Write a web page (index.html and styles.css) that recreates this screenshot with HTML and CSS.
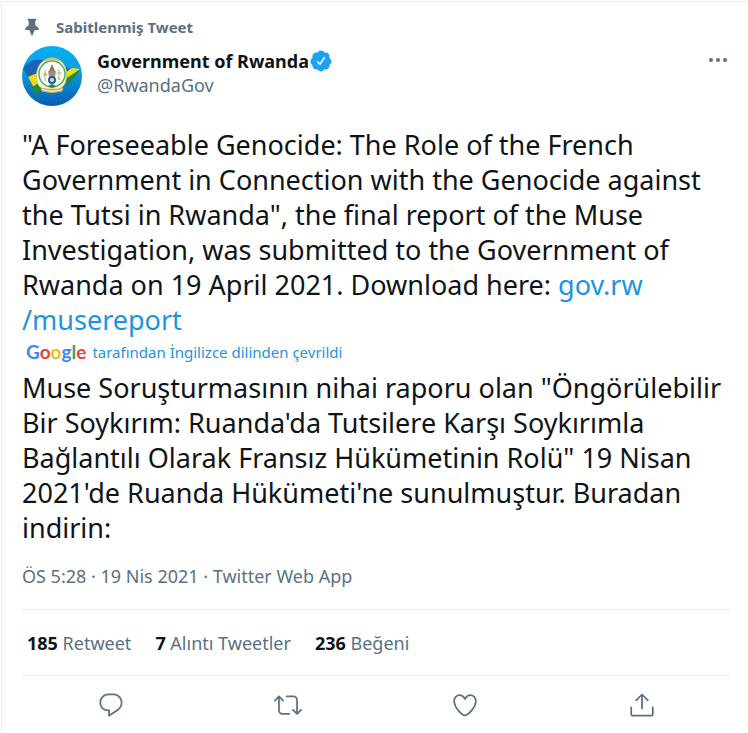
FILE: index.html
```html
<!DOCTYPE html>
<html lang="tr">
<head>
<meta charset="utf-8">
<meta name="viewport" content="width=device-width, initial-scale=1">
<title>Government of Rwanda</title>
<link rel="stylesheet" href="styles.css">
</head>
<body>
<article class="tweet">
  <div class="pinned">
    <svg class="pin" viewBox="0 0 24 24" aria-hidden="true"><path d="M20.235 14.61c-.375-1.745-2.342-3.506-4.01-4.125l-.544-4.948 1.495-2.242c.157-.236.172-.538.037-.787-.134-.25-.392-.403-.675-.403h-9.14c-.284 0-.542.154-.676.403-.134.25-.12.553.038.788l1.498 2.247-.484 4.943c-1.668.62-3.633 2.38-4.004 4.116-.04.16-.016.404.132.594.103.132.304.29.68.29H8.64l2.904 6.712c.078.184.26.302.458.302s.38-.118.46-.302l2.903-6.713h4.057c.376 0 .576-.156.68-.286.146-.188.172-.434.135-.59z"/></svg>
    <span>Sabitlenmiş Tweet</span>
  </div>
  <header class="author">
    <svg class="avatar" viewBox="0 0 60 60" aria-hidden="true">
      <defs>
        <linearGradient id="sky" x1="0" y1="0" x2="0" y2="1"><stop offset="0" stop-color="#04b0f2"/><stop offset=".4" stop-color="#0a9fe4"/><stop offset="1" stop-color="#075fae"/></linearGradient>
        <clipPath id="round"><circle cx="30" cy="30" r="30"/></clipPath>
      </defs>
      <g clip-path="url(#round)">
        <rect width="60" height="60" fill="url(#sky)"/>
        <path d="M1 23C6 15 12 13 20 14c9 2 17 6 24 7l10 4-9 4-30 8-9-6z" fill="#1c63b5"/>
        <path d="M6 31c4-1 6-4 10-3l26-1c4-1 6-5 9-5l7 1c-6 4-9 10-15 14l-28 4-4-1z" fill="#f4d90d"/>
        <path d="M10 42c3-2 4-5 8-6l24-3c6-2 10-7 16-9-4 6-8 12-15 15-9 4-19 3-26 7l-3 3z" fill="#23893b"/>
        <path d="M15 36c-2-11 2-23 15-24 13 1 16 13 14 22-1 5-4 8-7 9H22c-4-1-6-4-7-7z" fill="#f6f7e8" stroke="#cfc66c"/>
        <circle cx="30" cy="28" r="13" fill="#fffef7" stroke="#5aab62" stroke-width="1.5"/>
        <path d="M22 15q8-4 16 0" fill="none" stroke="#d1bc53" stroke-width="1.5"/>
        <path d="M30 18l3 7h-6z" fill="#8d7560"/><path d="M26 25h8l-1 6h-6z" fill="#b08878"/>
        <circle cx="30" cy="34" r="3" fill="#d5e9ed" stroke="#165f9b" stroke-width="2"/>
        <path d="M23 24v11M37 23v10M21 29h4M35 27h5" stroke="#9dbd91"/>
        <path d="M22 27l3 2M36 32l2 2" stroke="#dc7770"/>
        <path d="M26 40l4-2 4 2-4 2z" fill="#218440"/>
        <path d="M19 42q11 4 22 0l-1 3q-10 3-20 0z" fill="#f4ead0" stroke="#c8a949"/>
      </g>
    </svg>
    <div class="names">
      <div class="name"><a href="#">Government of Rwanda</a>
        <svg class="verified" viewBox="0 0 24 24" role="img" aria-label="Onaylanmış hesap"><path d="M22.5 12.5c0-1.58-.875-2.95-2.148-3.6.154-.435.238-.905.238-1.4 0-2.21-1.71-3.998-3.818-3.998-.47 0-.92.084-1.336.25C14.818 2.415 13.51 1.5 12 1.5s-2.816.917-3.437 2.25c-.415-.165-.866-.25-1.336-.25-2.11 0-3.818 1.79-3.818 4 0 .494.083.964.237 1.4-1.272.65-2.147 2.018-2.147 3.6 0 1.495.782 2.798 1.942 3.486-.02.17-.032.34-.032.514 0 2.21 1.708 4 3.818 4 .47 0 .92-.086 1.335-.25.62 1.334 1.926 2.25 3.437 2.25 1.512 0 2.818-.916 3.437-2.25.415.163.865.248 1.336.248 2.11 0 3.818-1.79 3.818-4 0-.174-.012-.344-.033-.513 1.158-.687 1.943-1.99 1.943-3.484zm-6.616-3.334l-4.334 6.5c-.145.217-.382.334-.625.334-.143 0-.288-.04-.416-.126l-.115-.094-2.415-2.415c-.293-.293-.293-.768 0-1.06s.768-.294 1.06 0l1.77 1.767 3.825-5.74c.23-.345.696-.436 1.04-.207.346.23.44.696.21 1.04z"/></svg>
      </div>
      <a class="handle" href="#">@RwandaGov</a>
    </div>
    <button class="more" type="button" aria-label="Daha fazla"><svg viewBox="0 0 24 24"><circle cx="5" cy="12" r="2"/><circle cx="12" cy="12" r="2"/><circle cx="19" cy="12" r="2"/></svg></button>
  </header>
  <p class="text" lang="en">"A Foreseeable Genocide: The Role of the French Government in Connection with the Genocide against the Tutsi in Rwanda", the final report of the Muse Investigation, was submitted to the Government of Rwanda on 19 April 2021. Download here: <a href="#">gov.rw<wbr>/musereport</a></p>
  <a class="translated" href="#"><span class="google"><span class="blue">G</span><span class="red">o</span><span class="yellow">o</span><span class="blue">g</span><span class="green">l</span><span class="red">e</span></span><span>tarafından İngilizce dilinden çevrildi</span></a>
  <p class="text">Muse Soruşturmasının nihai raporu olan "Öngörülebilir Bir Soykırım: Ruanda'da Tutsilere Karşı Soykırımla Bağlantılı Olarak Fransız Hükümetinin Rolü" 19 Nisan 2021'de Ruanda Hükümeti'ne sunulmuştur. Buradan indirin:</p>
  <div class="meta">ÖS 5:28 · 19 Nis 2021 · Twitter Web App</div>
  <div class="stats">
    <a href="#"><strong>185</strong> Retweet</a>
    <a href="#"><strong>7</strong> Alıntı Tweetler</a>
    <a href="#"><strong>236</strong> Beğeni</a>
  </div>
  <div class="actions">
    <button type="button" aria-label="Yanıtla"><svg viewBox="0 0 24 24"><path d="M14.046 2.242l-4.148-.01h-.002c-4.374 0-7.8 3.427-7.8 7.802 0 4.098 3.186 7.206 7.465 7.37v3.828c0 .108.044.286.12.403.142.225.384.347.632.347.138 0 .277-.038.402-.118.264-.168 6.473-4.14 8.088-5.506 1.902-1.61 3.04-3.97 3.043-6.312v-.017c-.006-4.367-3.43-7.787-7.8-7.788zm3.787 12.972c-1.134.96-4.862 3.405-6.772 4.643V16.67c0-.414-.335-.75-.75-.75h-.396c-3.66 0-6.318-2.476-6.318-5.886 0-3.534 2.768-6.302 6.3-6.302l4.147.01h.002c3.532 0 6.3 2.766 6.302 6.296-.003 1.91-.942 3.844-2.514 5.176z"/></svg></button>
    <button type="button" aria-label="Retweetle"><svg viewBox="0 0 24 24"><path d="M23.77 15.67c-.292-.293-.767-.293-1.06 0l-2.22 2.22V7.65c0-2.068-1.683-3.75-3.75-3.75h-5.85c-.414 0-.75.336-.75.75s.336.75.75.75h5.85c1.24 0 2.25 1.01 2.25 2.25v10.24l-2.22-2.22c-.293-.293-.768-.293-1.06 0s-.294.768 0 1.06l3.5 3.5c.145.147.337.22.53.22s.383-.072.53-.22l3.5-3.5c.294-.292.294-.767 0-1.06zm-10.66 3.28H7.26c-1.24 0-2.25-1.01-2.25-2.25V6.46l2.22 2.22c.148.147.34.22.532.22s.384-.073.53-.22c.293-.293.293-.768 0-1.06l-3.5-3.5c-.293-.294-.768-.294-1.06 0l-3.5 3.5c-.294.292-.294.767 0 1.06s.767.293 1.06 0l2.22-2.22V16.7c0 2.068 1.683 3.75 3.75 3.75h5.85c.414 0 .75-.336.75-.75s-.337-.75-.75-.75z"/></svg></button>
    <button type="button" aria-label="Beğen"><svg viewBox="0 0 24 24"><path d="M12 21.638h-.014C9.403 21.59 1.95 14.856 1.95 8.478c0-3.064 2.525-5.754 5.403-5.754 2.29 0 3.83 1.58 4.646 2.73.814-1.148 2.354-2.73 4.645-2.73 2.88 0 5.404 2.69 5.404 5.755 0 6.376-7.454 13.11-10.037 13.157H12zM7.354 4.225c-2.08 0-3.903 1.988-3.903 4.255 0 5.74 7.034 11.596 8.55 11.658 1.518-.062 8.55-5.917 8.55-11.658 0-2.267-1.823-4.255-3.903-4.255-2.528 0-3.94 2.936-3.952 2.965-.23.562-1.156.562-1.387 0-.014-.03-1.425-2.965-3.954-2.965z"/></svg></button>
    <button type="button" aria-label="Paylaş"><svg viewBox="0 0 24 24"><path d="M17.53 7.47l-5-5c-.293-.293-.768-.293-1.06 0l-5 5c-.294.293-.294.768 0 1.06s.767.294 1.06 0l3.72-3.72V15c0 .414.336.75.75.75s.75-.336.75-.75V4.81l3.72 3.72c.146.147.338.22.53.22s.384-.072.53-.22c.293-.293.293-.767 0-1.06z"/><path d="M19.708 21.944H4.292C3.028 21.944 2 20.916 2 19.652V14c0-.414.336-.75.75-.75s.75.336.75.75v5.652c0 .437.355.792.792.792h15.416c.437 0 .792-.355.792-.792V14c0-.414.336-.75.75-.75s.75.336.75.75v5.652c0 1.264-1.028 2.292-2.292 2.292z"/></svg></button>
  </div>
</article>
</body>
</html>
```
FILE: styles.css
```css
* { box-sizing: border-box; }
body {
  margin: 0;
  background: #fff;
  color: #0f1419;
  font-family: "Noto Sans", "Open Sans", sans-serif;
  font-size: 18px;
  line-height: 24px;
}
a { color: inherit; text-decoration: none; }
button {
  padding: 0;
  border: 0;
  background: none;
  cursor: pointer;
}
svg { display: block; fill: #5b7083; }
.tweet {
  margin: 1px 0 0 1px;
  padding: 14px 18px 0 20px;
  border: solid #ebeef0;
  border-width: 1px 0 0 1px;
}
.pinned {
  display: flex;
  align-items: center;
  gap: 14px;
  color: #5b7083;
  font-size: 15px;
  font-weight: 700;
  line-height: 22px;
}
.pin { width: 20px; height: 20px; }
.author {
  display: flex;
  align-items: flex-start;
  gap: 15px;
  margin-top: 8px;
}
.avatar { width: 60px; height: 60px; flex: none; }
.names { flex: 1; padding-top: 3px; }
.name {
  display: flex;
  align-items: center;
  font-weight: 700;
}
.verified { width: 24px; height: 24px; fill: #1da1f2; }
.handle { color: #5b7083; }
.more { padding-top: 2px; }
.more svg { width: 24px; height: 24px; }
.text {
  margin: 0;
  font-size: 27px;
  line-height: 35px;
}
.author + .text { margin-top: 21px; }
.text a, .translated { color: #1b95e0; }
.translated {
  display: flex;
  align-items: center;
  gap: 6px;
  height: 33px;
  padding: 0 4px 4px;
  font-size: 15px;
}
.google { font-family: Lato, sans-serif; font-size: 19px; font-weight: 700; }
.blue { color: #4285f4; }
.red { color: #ea4335; }
.yellow { color: #fbbc05; }
.green { color: #34a853; }
.meta {
  margin-top: 19px;
  padding-bottom: 21px;
  color: #5b7083;
}
.stats {
  display: flex;
  gap: 24px;
  padding: 21px 5px 20px;
  border: solid #ebeef0;
  border-width: 1px 0;
  color: #5b7083;
}
.stats strong { color: #0f1419; }
.actions {
  display: grid;
  grid-template-columns: repeat(4, 1fr);
  justify-items: center;
  padding: 15px 0;
}
.actions svg { width: 28px; height: 28px; }
```
